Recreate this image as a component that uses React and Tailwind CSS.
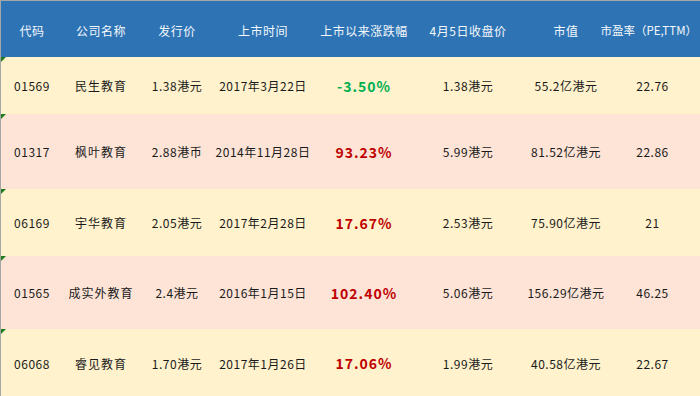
import React from 'react';

const COLS = ['w-[62px]', 'w-[76px]', 'w-[76px]', 'w-[96px]', 'w-[106px]', 'w-[102px]', 'w-[94px]', 'flex-1 min-w-0'];

const HEADERS = ['代码', '公司名称', '发行价', '上市时间', '上市以来涨跌幅', '4月5日收盘价', '市值', '市盈率（PE,TTM）'];

const ROWS = [
  { code: '01569', name: '民生教育', price: '1.38港元', date: '2017年3月22日', chg: '-3.50%', up: false, close: '1.38港元', cap: '55.2亿港元', pe: '22.76', bg: 'bg-[#fff2cc]', h: 'h-[57px]' },
  { code: '01317', name: '枫叶教育', price: '2.88港币', date: '2014年11月28日', chg: '93.23%', up: true, close: '5.99港元', cap: '81.52亿港元', pe: '22.86', bg: 'bg-[#fde4d7]', h: 'h-[75px]' },
  { code: '06169', name: '宇华教育', price: '2.05港元', date: '2017年2月28日', chg: '17.67%', up: true, close: '2.53港元', cap: '75.90亿港元', pe: '21', bg: 'bg-[#fff2cc]', h: 'h-[67px]' },
  { code: '01565', name: '成实外教育', price: '2.4港元', date: '2016年1月15日', chg: '102.40%', up: true, close: '5.06港元', cap: '156.29亿港元', pe: '46.25', bg: 'bg-[#fde4d7]', h: 'h-[73px]' },
  { code: '06068', name: '睿见教育', price: '1.70港元', date: '2017年1月26日', chg: '17.06%', up: true, close: '1.99港元', cap: '40.58亿港元', pe: '22.67', bg: 'bg-[#fff2cc]', h: 'h-[68px]' },
];

function Cell({ i, children, className = 'justify-center' }) {
  return (
    <div className={`${COLS[i]} shrink-0 flex items-center whitespace-nowrap ${className}`}>
      {children}
    </div>
  );
}

function Row({ r }) {
  const cells = [r.code, r.name, r.price, r.date, null, r.close, r.cap, r.pe];
  return (
    <div className={`relative flex ${r.h} ${r.bg} text-[12px] text-[#1a1a1a] pt-[1px]`}>
      {/* green corner marker */}
      <div className="absolute left-0 top-0 w-0 h-0 border-t-[5px] border-r-[5px] border-t-[#1e7b1e] border-r-transparent" />
      {cells.map((c, i) => {
        if (i === 4) {
          return (
            <Cell key={i} i={i} className={`justify-center text-[14px] font-bold tracking-[1px] ${r.up ? 'text-[#c00000]' : 'text-[#00b050]'}`}>
              {r.chg}
            </Cell>
          );
        }
        if (i === 7) {
          return (
            <Cell key={i} i={i} className="justify-center pr-[8px] tracking-[0.5px]">
              {c}
            </Cell>
          );
        }
        return (
          <Cell key={i} i={i} className={`justify-center ${i === 1 ? 'tracking-[1px]' : 'tracking-[0.5px]'}`}>
            {c}
          </Cell>
        );
      })}
    </div>
  );
}

export default function App() {
  return (
    <div
      className="w-[700px] h-[396px] overflow-hidden bg-white border-t border-l border-[#a6a6a6]"
      style={{ fontFamily: '"Noto Sans CJK SC", "Noto Sans", sans-serif' }}
    >
      <div className="flex h-[56px] pt-[3px] bg-[#2e74b5] text-[#f4f7fb] text-[12px]">
        {HEADERS.map((h, i) => (
          <Cell key={h} i={i} className={i === 7 ? 'justify-end pr-[3px] text-[11.5px]' : 'justify-center tracking-[0.5px]'}>
            {h}
          </Cell>
        ))}
      </div>
      {ROWS.map(r => (
        <Row key={r.code} r={r} />
      ))}
    </div>
  );
}
